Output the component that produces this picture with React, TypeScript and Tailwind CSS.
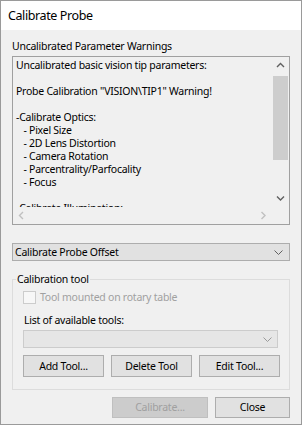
import React from "react";

const Chev = ({ dir, color }: { dir: "up" | "down" | "left" | "right"; color: string }) => {
  const paths: Record<string, string> = {
    up: "M1 5 L4.5 1.5 L8 5",
    down: "M1 1.5 L4.5 5 L8 1.5",
    left: "M5 1 L1.5 4.5 L5 8",
    right: "M1.5 1 L5 4.5 L1.5 8",
  };
  const horiz = dir === "up" || dir === "down";
  return (
    <svg width={horiz ? 9 : 7} height={horiz ? 7 : 9} viewBox={horiz ? "0 0 9 7" : "0 0 7 9"}>
      <path d={paths[dir]} fill="none" stroke={color} strokeWidth="1.4" />
    </svg>
  );
};

const SmallChev = ({ color }: { color: string }) => (
  <svg width="9" height="5" viewBox="0 0 9 5">
    <path d="M0.5 0.5 L4.5 4.5 L8.5 0.5" fill="none" stroke={color} strokeWidth="1" />
  </svg>
);

export default function App() {
  const lines = [
    "Uncalibrated basic vision tip parameters:",
    "",
    'Probe Calibration "VISION\\TIP1" Warning!',
    "",
    "-Calibrate Optics:",
    "   - Pixel Size",
    "   - 2D Lens Distortion",
    "   - Camera Rotation",
    "   - Parcentrality/Parfocality",
    "   - Focus",
    "",
    "-Calibrate Illumination:",
  ];
  return (
    <div className="w-[302px] h-[425px] border border-[#9a9a9a] bg-[#f0f0f0] flex flex-col font-['Noto_Sans',sans-serif] text-[10.5px] tracking-[-0.25px] text-black overflow-hidden">
      <div className="h-[29px] bg-white flex items-center pl-[7px] pt-[2px] text-[12.5px] tracking-[-0.4px] leading-none shrink-0">
        Calibrate Probe
      </div>
      <div className="flex flex-col pl-[11px]">
        <div className="h-[26px] flex items-end pb-[5px] leading-none">Uncalibrated Parameter Warnings</div>
        <div className="w-[278px] h-[169px] border border-[#a0a0a0] flex flex-col">
          <div className="flex h-[150px]">
            <div className="flex-1 overflow-hidden pl-[3px] pt-[2px] leading-[13px] whitespace-pre">
              {lines.map((l, i) => (
                <div key={i} className="h-[13px]">{l}</div>
              ))}
            </div>
            <div className="w-[17px] flex flex-col items-center">
              <div className="h-[17px] flex items-center justify-center">
                <Chev dir="up" color="#606060" />
              </div>
              <div className="w-[15px] h-[84px] bg-[#cdcdcd] mt-[2px]" />
              <div className="flex-1" />
              <div className="h-[17px] flex items-center justify-center">
                <Chev dir="down" color="#606060" />
              </div>
            </div>
          </div>
          <div className="flex h-[17px]">
            <div className="flex-1 flex items-center justify-between px-[5px]">
              <Chev dir="left" color="#c0c0c0" />
              <Chev dir="right" color="#c0c0c0" />
            </div>
            <div className="w-[17px]" />
          </div>
        </div>
        <div className="w-[278px] h-[18px] mt-[18px] border border-[#adadad] bg-[#e1e1e1] flex items-center justify-between pl-[2px] pr-[6px] leading-none">
          <span>Calibrate Probe Offset</span>
          <SmallChev color="#606060" />
        </div>
        <div className="w-[278px] h-[111px] mt-[18px] border border-[#dcdcdc] relative flex flex-col pl-[10px]">
          <div className="absolute left-[3px] top-[-8px] bg-[#f0f0f0] px-[1px] leading-[14px]">Calibration tool</div>
          <div className="flex items-center mt-[10px] h-[14px]">
            <div className="w-[13px] h-[13px] border border-[#cccccc] bg-[#f7f7f7]" />
            <span className="ml-[4px] text-[#a0a0a0] leading-none">Tool mounted on rotary table</span>
          </div>
          <div className="mt-[9px] h-[14px] flex items-center leading-none pl-[1px]">List of available tools:</div>
          <div className="w-[255px] h-[18px] mt-[3px] border border-[#cccccc] bg-[#e6e6e6] flex items-center justify-end pr-[5px]">
            <SmallChev color="#9a9a9a" />
          </div>
          <div className="flex gap-[7px] mt-[7px]">
            {["Add Tool...", "Delete Tool", "Edit Tool..."].map((t) => (
              <div key={t} className="w-[81px] h-[22px] border border-[#adadad] bg-[#e1e1e1] flex items-center justify-center leading-none">
                {t}
              </div>
            ))}
          </div>
        </div>
        <div className="flex justify-end w-[278px] gap-[7px] mt-[7px]">
          <div className="w-[96px] h-[21px] border border-[#bfbfbf] bg-[#cccccc] text-[#a0a0a0] flex items-center justify-center leading-none">
            Calibrate...
          </div>
          <div className="w-[75px] h-[21px] border border-[#adadad] bg-[#e1e1e1] flex items-center justify-center leading-none">
            Close
          </div>
        </div>
      </div>
    </div>
  );
}
